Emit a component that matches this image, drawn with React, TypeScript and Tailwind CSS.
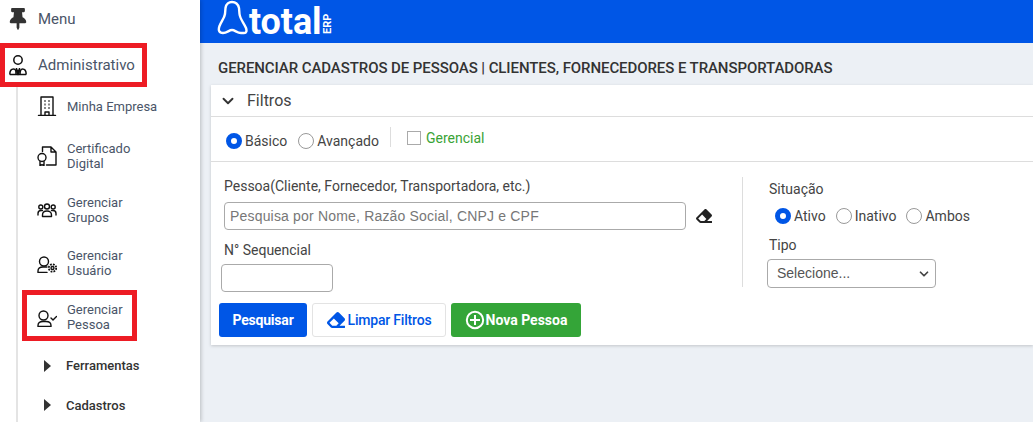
import React from "react";
import { FaThumbtack, FaEraser } from "react-icons/fa";
import { ChevronDown } from "lucide-react";

const Ic = ({ children }: { children: React.ReactNode }) => (
  <svg width={20} height={20} viewBox="0 0 20 20" fill="none" stroke="#111" strokeWidth="1.4" strokeLinecap="round" strokeLinejoin="round">{children}</svg>
);

const Logo = () => (
  <svg width="32" height="36" viewBox="0 0 32 36" fill="none" stroke="#fff" strokeWidth="2.4" strokeLinejoin="round">
    <path d="M16 2C13 2 10 4 9.500 8L9 14C8.500 18 5 22 3.500 26C2 30 3 33 7 33C11 33 13 30 16 30C19 30 21 33 25 33L28 33C30.500 33 31 31 30 28C28 23 24 19 23.500 14L23 8C22 4 19 2 16 2Z" />
  </svg>
);

const SubItem = ({ icon, a, b }: { icon: React.ReactNode; a: string; b?: string }) => (
  <div className="flex items-center gap-[9px] pl-[18px]">
    <div className="flex w-[22px] justify-center">{icon}</div>
    <div className="text-[13px] leading-[15px] text-[#4a5568]">
      <div>{a}</div>
      {b && <div>{b}</div>}
    </div>
  </div>
);

const Radio = ({ on, label }: { on?: boolean; label: string }) => (
  <label className="flex items-center gap-[3px] text-[14px] text-[#444]">
    {on ? (
      <span className="h-[16px] w-[16px] rounded-full border-[5px] border-[#0056e6] bg-white" />
    ) : (
      <span className="h-[16px] w-[16px] rounded-full border border-[#999] bg-white" />
    )}
    {label}
  </label>
);

const Arrow = ({ label, cls }: { label: string; cls: string }) => (
  <div className={`flex items-center pl-[26px] text-[13px] font-medium text-[#333] ${cls}`}>
    <svg width="7" height="12" viewBox="0 0 7 12" className="mr-[15px]">
      <polygon points="0,0 7,6 0,12" fill="#333" />
    </svg>
    {label}
  </div>
);

export default function App() {
  return (
    <div className="flex h-[422px] w-[1033px] overflow-hidden bg-[#ecf0f5] font-['Roboto',sans-serif]">
      <aside className="relative z-10 h-[422px] w-[200px] shrink-0 overflow-hidden bg-white shadow-[1px_0_4px_rgba(0,0,0,0.22)]">
        <div className="flex h-[43px] items-center pb-[5px] pl-[9px] text-[15px] text-[#4a5568]">
          <FaThumbtack className="mr-[11px] h-[22px] w-[18px] text-[#333]" />
          Menu
        </div>
        <div className="flex h-[44px] w-[147px] items-center border-[5px] border-[#ed1c24] pl-[4px] text-[15px] text-[#4a5568]">
          <svg width="20" height="22" viewBox="0 0 20 22" fill="none" stroke="#111" strokeWidth="1.5" strokeLinejoin="round" className="mr-[9px]">
            <circle cx="9" cy="6" r="4.200" />
            <path d="M0.800 20.500C0.800 17 2 15 4.500 15S7 17 7 20.500M11 20.500C11 17 11.500 15 13.500 15S17.200 17 17.200 20.500M0.800 20.500H17.200" />
            <path d="M7.500 14C7.500 15 7.500 19 9 20.500 10.500 19 10.500 15 10.500 14" />
            <path d="M9 15.500V20" strokeWidth="2" />
          </svg>
          Administrativo
        </div>
        <div className="ml-[16px] h-[335px] border-l-2 border-[#e4e4e4]">
          <div className="pt-[9px]">
            <SubItem
              a="Minha Empresa"
              icon={
                <Ic>
                  <path d="M1.500 19.500H18.500M4 19.500V1H16V19.500M8 19.500V16H12V19.500" />
                  <path d="M7.500 5H8.500M11.500 5H12.500M7.500 8.500H8.500M11.500 8.500H12.500M7.500 12H8.500M11.500 12H12.500" strokeWidth="2" strokeLinecap="butt" />
                </Ic>
              }
            />
          </div>
          <div className="pt-[25px]">
            <SubItem
              a="Certificado"
              b="Digital"
              icon={
                <Ic>
                  <path d="M5.500 5.500V1H14L19 6V19H9.500M14 1V6H19" />
                  <circle cx="5" cy="11.500" r="4" />
                  <path d="M3 15.500V19.800L5 18.500 7 19.800V15.500" />
                </Ic>
              }
            />
          </div>
          <div className="pt-[24px]">
            <SubItem
              a="Gerenciar"
              b="Grupos"
              icon={
                <Ic>
                  <circle cx="3.800" cy="7" r="2" />
                  <circle cx="10" cy="6.500" r="2.500" />
                  <circle cx="16.200" cy="7" r="2" />
                  <path d="M1 15V13.500C1 11.500 2.500 10.500 4 10.500H5.500M19 15V13.500C19 11.500 17.500 10.500 16 10.500H14.500M5.500 16.500V15C5.500 12.500 7.500 11 10 11S14.500 12.500 14.500 15V16.500Z" />
                </Ic>
              }
            />
          </div>
          <div className="pt-[23px]">
            <SubItem
              a="Gerenciar"
              b="Usuário"
              icon={
                <Ic>
                  <circle cx="7" cy="8.500" r="4.500" />
                  <path d="M1 19.500V18C1 15.500 3 14 6 14H10M1 19.500H10" />
                  <circle cx="15.500" cy="15" r="1.500" />
                  <circle cx="15.500" cy="15" r="3.700" strokeDasharray="1.800 1.100" strokeWidth="1.800" strokeLinecap="butt" />
                </Ic>
              }
            />
          </div>
          <div className="ml-[4px] mt-[12px] flex h-[51px] w-[115px] items-center border-[5px] border-[#ed1c24] pl-[9px] pt-[2px]">
            <div className="mr-[9px] flex w-[22px] justify-center">
              <Ic>
                <circle cx="6.500" cy="8.500" r="4.500" />
                <path d="M1 19.500V18.500C1 16 3 14.500 6 14.500H9C12 14.500 14 16 14 18.500V19.500ZM14 11L16 13 19.500 9.500" />
              </Ic>
            </div>
            <div className="text-[13px] leading-[15px] text-[#4a5568]">
              <div>Gerenciar</div>
              <div>Pessoa</div>
            </div>
          </div>
          <Arrow label="Ferramentas" cls="mt-[15px]" />
          <Arrow label="Cadastros" cls="mt-[20px]" />
        </div>
      </aside>

      <main className="min-w-0 flex-1">
        <header className="flex h-[43px] items-start bg-[#0056e6] pl-[16px] text-white">
          <Logo />
          <span className="ml-[1px] mt-[1px] h-[42px] text-[36px] font-bold leading-[42px] tracking-[-0.1px]">total</span>
          <span className="ml-[1px] mt-[13px] h-[22px] rotate-180 text-center text-[11px] font-bold leading-[10px] [writing-mode:vertical-rl]">ERP</span>
        </header>

        <h1 className="pl-[18px] pt-[16px] text-[15px] font-medium leading-[18px] tracking-[-0.08px] text-[#333]">
          GERENCIAR CADASTROS DE PESSOAS | CLIENTES, FORNECEDORES E TRANSPORTADORAS
        </h1>

        <section className="ml-[11px] mt-[8px] h-[260px] bg-white shadow-[0_1px_3px_rgba(0,0,0,0.18)]">
          <div className="flex h-[32px] items-center border-b border-[#ddd] pl-[8px] text-[16px] text-[#444]">
            <ChevronDown className="mr-[10px] h-[18px] w-[18px] text-[#333]" strokeWidth={2.500} />
            Filtros
          </div>

          <div className="flex h-[45px] items-center border-b border-[#ddd] pl-[15px] pt-[4px]">
            <Radio on label="Básico" />
            <div className="ml-[11px]">
              <Radio label="Avançado" />
            </div>
            <div className="mb-[8px] ml-[11px] h-[20px] border-l border-[#ddd]" />
            <span className="mb-[6px] ml-[16px] h-[14px] w-[14px] border border-[#aaa] bg-white" />
            <span className="mb-[6px] ml-[5px] text-[14px] text-[#3aa335]">Gerencial</span>
          </div>

          <div className="flex h-[141px]">
            <div className="my-[15px] h-[110px] w-[532px] shrink-0 border-r border-[#ddd] pl-[10px]">
              <div className="-mt-[1px] pl-[3px] text-[14px] leading-[20px] text-[#444]">Pessoa(Cliente, Fornecedor, Transportadora, etc.)</div>
              <div className="mt-[6px] flex items-center">
                <input
                  readOnly
                  placeholder="Pesquisa por Nome, Razão Social, CNPJ e CPF"
                  className="ml-[3px] h-[28px] w-[462px] rounded-[4px] border border-[#aaa] pl-[5px] font-['Liberation_Sans',sans-serif] text-[14px] tracking-[0.18px] placeholder:text-[#777]"
                />
                <FaEraser className="ml-[10px] h-[16px] w-[16px] text-[#222]" />
              </div>
              <div className="mt-[10px] pl-[3px] text-[14px] leading-[20px] text-[#444]">N° Sequencial</div>
              <input readOnly className="mt-[4px] block h-[28px] w-[112px] rounded-[4px] border border-[#aaa]" />
            </div>
            <div className="pl-[24px] pt-[17px]">
              <div className="pl-[2px] text-[14px] leading-[20px] text-[#444]">Situação</div>
              <div className="mt-[7px] flex h-[20px] items-center gap-[10px] pl-[8px]">
                <Radio on label="Ativo" />
                <Radio label="Inativo" />
                <Radio label="Ambos" />
              </div>
              <div className="mt-[9px] pl-[2px] text-[14px] leading-[20px] text-[#444]">Tipo</div>
              <div className="mt-[4px] flex h-[29px] w-[169px] items-center justify-between rounded-[4px] border border-[#aaa] pl-[9px] pr-[4px] font-['Liberation_Sans',sans-serif] text-[14px] text-[#555]">
                Selecione...
                <ChevronDown className="h-[14px] w-[14px] text-[#444]" strokeWidth={3} />
              </div>
            </div>
          </div>

          <div className="flex gap-[5px] pl-[8px]">
            <button className="h-[34px] w-[88px] rounded-[3px] bg-[#0056e6] text-[14px] font-bold tracking-[-0.2px] text-white">Pesquisar</button>
            <button className="flex h-[34px] w-[134px] items-center justify-center gap-[3px] rounded-[3px] border border-[#e3e3e3] bg-white text-[14px] font-medium tracking-[-0.2px] text-[#0056e6]">
              <FaEraser className="h-[18px] w-[18px]" />
              Limpar Filtros
            </button>
            <button className="flex h-[34px] w-[130px] items-center justify-center gap-[1px] rounded-[3px] bg-[#34a538] text-[14px] font-bold text-white">
              <svg width="20" height="20" viewBox="0 0 20 20" fill="none" stroke="#fff" strokeWidth="2">
                <circle cx="10" cy="10" r="8.200" />
                <path d="M10 5v10M5 10h10" />
              </svg>
              Nova Pessoa
            </button>
          </div>
        </section>
      </main>
    </div>
  );
}
